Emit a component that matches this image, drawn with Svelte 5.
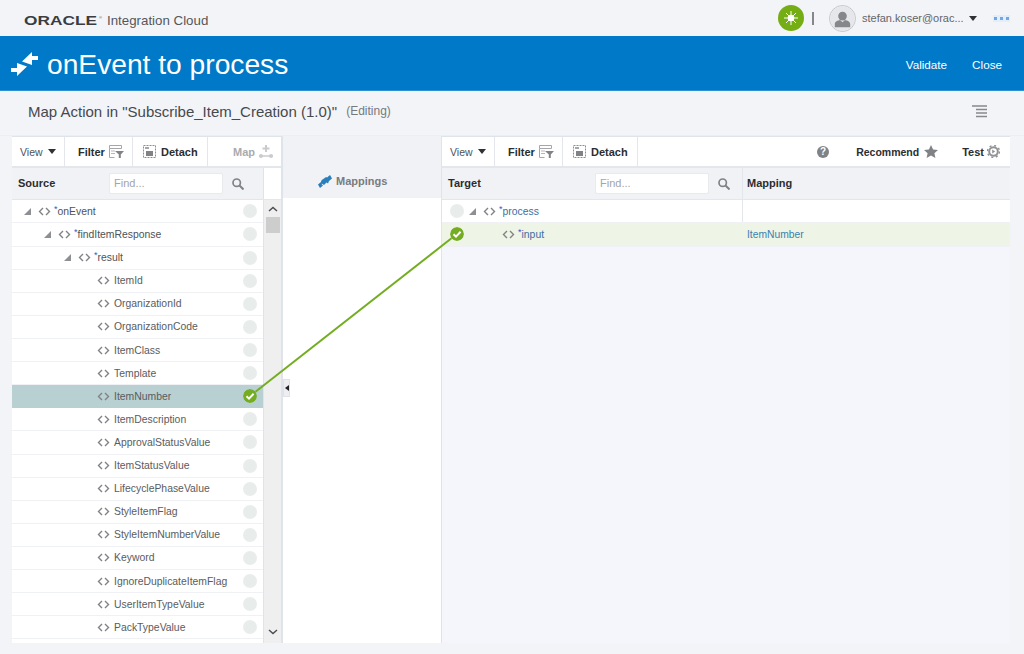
<script>
	const sourceRows = [
		{ name: "onEvent", level: 0, open: true, req: true },
		{ name: "findItemResponse", level: 1, open: true, req: true },
		{ name: "result", level: 2, open: true, req: true },
		{ name: "ItemId", level: 3 },
		{ name: "OrganizationId", level: 3 },
		{ name: "OrganizationCode", level: 3 },
		{ name: "ItemClass", level: 3 },
		{ name: "Template", level: 3 },
		{ name: "ItemNumber", level: 3, mapped: true },
		{ name: "ItemDescription", level: 3 },
		{ name: "ApprovalStatusValue", level: 3 },
		{ name: "ItemStatusValue", level: 3 },
		{ name: "LifecyclePhaseValue", level: 3 },
		{ name: "StyleItemFlag", level: 3 },
		{ name: "StyleItemNumberValue", level: 3 },
		{ name: "Keyword", level: 3 },
		{ name: "IgnoreDuplicateItemFlag", level: 3 },
		{ name: "UserItemTypeValue", level: 3 },
		{ name: "PackTypeValue", level: 3 }
	];
</script>

{#snippet tag()}
	<svg class="tag" width="13" height="9" viewBox="0 0 13 9"><path d="M5 1 1.500 4.500 5 8M8 1l3.500 3.500L8 8" fill="none" stroke="#808285" stroke-width="1.400"/></svg>
{/snippet}

{#snippet tri()}
	<svg class="tri" width="7" height="7" viewBox="0 0 7 7"><path d="M7 0v7H0z" fill="#8d8f92"/></svg>
{/snippet}

{#snippet check()}
	<svg class="dot" width="14" height="14" viewBox="0 0 14 14"><circle cx="7" cy="7" r="7" fill="#74ad22"/><path d="M3.500 7.200 6 9.600l4.600-4.800" fill="none" stroke="#fff" stroke-width="2"/></svg>
{/snippet}

{#snippet filterIcon()}
	<svg width="15" height="14" viewBox="0 0 15 14"><path d="M.5.500h12v3h-12zM.5 3.500v9h5" fill="none" stroke="#a5a7aa"/><path d="M2 6h4M2 8.500h4" stroke="#b5b7ba"/><path d="M6 6h9L11.800 9.500V13h-2V9.500z" fill="#808285"/></svg>
{/snippet}

{#snippet detachIcon()}
	<svg width="13" height="13" viewBox="0 0 13 13"><rect x=".5" y=".5" width="12" height="12" fill="none" stroke="#8b8d90" stroke-dasharray="2 1"/><path d="M2 2h4v2H2z" fill="#a5a7aa"/><rect x="3" y="6" width="7" height="5" fill="#808285"/></svg>
{/snippet}

<div class="page">
	<header class="brandbar">
		<div class="brand">
			<span class="oracle">ORACLE</span><span class="reg">®</span>
			<span class="product">Integration Cloud</span>
		</div>
		<div class="user">
			<span class="sun">
				<svg width="14" height="14" viewBox="0 0 14 14"><circle cx="7" cy="7" r="3.300" fill="#fff"/><path d="M7 0v14M0 7h14M2 2l10 10M12 2 2 12" stroke="#fff" stroke-width="1"/></svg>
			</span>
			<span class="divider"></span>
			<span class="avatar">
				<svg width="25" height="25" viewBox="0 0 26 26"><circle cx="13" cy="13" r="13" fill="#e6e7ea"/><circle cx="13" cy="10.500" r="4.500" fill="#85878b"/><path d="M5 22v-3c0-3 3-4 5.500-4.500L13 17l2.500-2.500C18 15 21 16 21 19v3z" fill="#85878b"/></svg>
			</span>
			<span class="email">stefan.koser@orac...</span>
			<span class="caret"></span>
			<span class="more"><i></i><i></i><i></i></span>
		</div>
	</header>

	<div class="titlebar">
		<svg width="27" height="24" viewBox="0 0 27 24"><path d="M21 0 11 9.500 21 13V8h6V4h-6z" fill="#fff"/><path d="M6 24 16 14.500 6 11v5H0v4h6z" fill="#fff"/></svg>
		<h1>onEvent to process</h1>
		<nav>
			<span>Validate</span>
			<span>Close</span>
		</nav>
	</div>

	<div class="subbar">
		<span class="action">Map Action in "Subscribe_Item_Creation (1.0)"</span>
		<span class="editing">(Editing)</span>
		<svg class="lines" width="15" height="13" viewBox="0 0 15 13"><path d="M0 1h15M4 4.500h11M4 8h11M4 11.500h11" stroke="#86888b" stroke-width="1.500"/></svg>
	</div>

	<main class="mapper">
		<section class="panel source">
			<div class="toolbar">
				<div class="tool view"><span>View</span><span class="caret"></span></div>
				<div class="tool filter"><b>Filter</b>{@render filterIcon()}</div>
				<div class="tool detach">{@render detachIcon()}<b>Detach</b></div>
				<div class="tool map">
					<b>Map</b>
					<svg width="14" height="13" viewBox="0 0 14 13"><path d="M7 0v7M3.500 3.500h7" stroke="#c9cbce" stroke-width="2"/><path d="M0 11h14" stroke="#c9cbce" stroke-width="1.500"/><circle cx="2" cy="11" r="2" fill="#c9cbce"/><circle cx="12" cy="11" r="2" fill="#c9cbce"/></svg>
				</div>
			</div>
			<div class="head">
				<div class="headmain">
					<b>Source</b>
					<div class="find">Find...</div>
					<svg class="search" width="12" height="12" viewBox="0 0 12 12"><circle cx="4.700" cy="4.700" r="3.700" fill="none" stroke="#808285" stroke-width="1.700"/><path d="m7.500 7.500 4 4" stroke="#808285" stroke-width="2"/></svg>
				</div>
				<div class="headgap"></div>
			</div>
			<div class="treewrap">
				<div class="tree">
					{#each sourceRows as row}
						<div class="row" class:selected={row.mapped}>
							<div class="label level{row.level}">
								{#if row.open}{@render tri()}{/if}
								{@render tag()}
								<span class="name" class:req={row.req}>{#if row.req}<sup>*</sup>{/if}{row.name}</span>
							</div>
							{#if row.mapped}{@render check()}{:else}<span class="dot empty"></span>{/if}
						</div>
					{/each}
				</div>
				<div class="scrollbar">
					<svg width="10" height="6" viewBox="0 0 10 6"><path d="m1 5 4-3.500L9 5" fill="none" stroke="#4c4e51" stroke-width="1.500"/></svg>
					<div class="thumb"></div>
					<svg class="down" width="10" height="6" viewBox="0 0 10 6"><path d="m1 1 4 3.500L9 1" fill="none" stroke="#4c4e51" stroke-width="1.500"/></svg>
				</div>
			</div>
		</section>

		<section class="middle">
			<div class="middlehead">
				<svg width="14" height="13" viewBox="0 0 14 13"><path d="M0 9.500 3 7l1-2.500L6 6 3.500 9 5 10.500 2 13zM14 3.500 11 6l-1 2.500L8 7l2.500-3L9 2.500 12 0z" fill="#2a7fba"/><path d="M4 5 8 2l4 2-4 4-2 2-3-2z" fill="#2a7fba"/></svg>
				<b>Mappings</b>
			</div>
			<div class="collapse"><span></span></div>
		</section>

		<section class="panel target">
			<div class="toolbar">
				<div class="tool view"><span>View</span><span class="caret"></span></div>
				<div class="tool filter"><b>Filter</b>{@render filterIcon()}</div>
				<div class="tool detach">{@render detachIcon()}<b>Detach</b></div>
				<div class="toolright">
					<span class="help">?</span>
					<b class="recommend">Recommend</b>
					<svg width="14" height="13" viewBox="0 0 14 13"><path d="m7 0 2.100 4.500 4.900.5-3.600 3.300 1 4.700L7 10.600 2.600 13l1-4.700L0 5l4.900-.5z" fill="#808285"/></svg>
					<b class="test">Test</b>
					<svg width="13" height="13" viewBox="0 0 13 13"><circle cx="6.500" cy="6.500" r="4.300" fill="none" stroke="#909295" stroke-width="2"/><circle cx="6.500" cy="6.500" r="6" fill="none" stroke="#909295" stroke-width="1.500" stroke-dasharray="2 2.700"/><path d="M5.200 4.500v4l3-2z" fill="#909295"/></svg>
				</div>
			</div>
			<div class="head">
				<div class="targetcol">
					<b>Target</b>
					<div class="find">Find...</div>
					<svg class="search" width="12" height="12" viewBox="0 0 12 12"><circle cx="4.700" cy="4.700" r="3.700" fill="none" stroke="#808285" stroke-width="1.700"/><path d="m7.500 7.500 4 4" stroke="#808285" stroke-width="2"/></svg>
				</div>
				<div class="mappingcol"><b>Mapping</b></div>
			</div>
			<div class="targettree">
				<div class="trow">
					<div class="targetcol first">
						<span class="dot empty"></span>
						{@render tri()}
						{@render tag()}
						<span class="name req"><sup>*</sup>process</span>
					</div>
					<div class="mappingcol"></div>
				</div>
				<div class="trow mapped">
					<div class="targetcol second">
						{@render check()}
						<span class="indent">{@render tag()}</span>
						<span class="name"><sup>*</sup>input</span>
					</div>
					<div class="mappingcol link">ItemNumber</div>
				</div>
			</div>
		</section>

		<svg class="wire" width="220" height="170" viewBox="0 0 220 170"><path d="M9.500 161.700 205.500 8.300" stroke="#74ad22" stroke-width="2" fill="none"/></svg>
	</main>
</div>

<style>
	:global(body) {
		margin: 0;
		background: #f3f4f7;
	}

	.page {
		width: 1024px;
		height: 654px;
		overflow: hidden;
		background: #f3f4f7;
		font-family: "Liberation Sans", Arial, sans-serif;
		font-size: 11px;
		color: #4f5256;
	}

	.brandbar {
		height: 36px;
		display: flex;
		align-items: center;
		justify-content: space-between;
		padding: 0 14px 0 24px;
		box-sizing: border-box;
	}

	.brand {
		display: flex;
		align-items: center;
		padding-top: 5px;
	}

	.oracle {
		font-size: 13px;
		font-weight: 700;
		color: #3a3c3f;
		transform: scaleX(1.330);
		transform-origin: left center;
		width: 75px;
	}

	.reg {
		font-size: 4px;
		margin: -6px 0 0 0;
		width: 8px;
	}

	.product {
		font-size: 13.300px;
		color: #54575b;
	}

	.user {
		display: flex;
		align-items: center;
	}

	.sun {
		width: 26px;
		height: 26px;
		border-radius: 50%;
		background: #74ad14;
		display: flex;
		align-items: center;
		justify-content: center;
	}

	.divider {
		width: 2px;
		height: 13px;
		background: #85878b;
		margin: 0 15px 0 8px;
	}

	.avatar {
		width: 25px;
		height: 25px;
		border: 1px solid #c4c5c8;
		border-radius: 50%;
		display: flex;
		overflow: hidden;
	}

	.email {
		font-size: 11px;
		color: #636569;
		margin-left: 6px;
		width: 107px;
	}

	.caret {
		width: 0;
		height: 0;
		border-left: 4px solid transparent;
		border-right: 4px solid transparent;
		border-top: 5px solid #2f3134;
		display: inline-block;
	}

	.more {
		display: flex;
		gap: 3px;
		margin-left: 16px;
		padding: 2px 1px;
		background: #e3eefa;
	}

	.more i {
		width: 3px;
		height: 3px;
		background: #6fa8e6;
	}

	.titlebar {
		height: 55px;
		background: #0079c8;
		display: flex;
		align-items: center;
		color: #fff;
		padding: 2px 22px 0 11px;
		border-bottom: 1px solid #2f8fd0;
		box-sizing: border-box;
	}

	h1 {
		margin: 0 0 0 9px;
		font-size: 28.200px;
		font-weight: 400;
		color: #fff;
	}

	nav {
		margin-left: auto;
		display: flex;
		gap: 25px;
		font-size: 11.700px;
	}

	.subbar {
		height: 45px;
		display: flex;
		align-items: center;
		padding: 0 37px 4px 28px;
		box-sizing: border-box;
		border-bottom: 1px solid #eceef1;
	}

	.action {
		font-size: 15px;
		color: #46494d;
	}

	.editing {
		font-size: 12px;
		color: #77797d;
		margin-left: 9px;
	}

	.lines {
		margin-left: auto;
	}

	.mapper {
		position: relative;
		display: flex;
		height: 507px;
		margin-left: 12px;
		width: 998px;
	}

	.panel {
		display: flex;
		flex-direction: column;
		border-top: 1px solid #dfe4ea;
		box-sizing: border-box;
	}

	.source {
		width: 270px;
		background: #fff;
		border-right: 1px solid #dfe4ea;
	}

	.target {
		width: 568px;
		background: #f5f6fb;
	}

	.toolbar {
		height: 29px;
		flex: none;
		display: flex;
		align-items: center;
		background: #fff;
		border-bottom: 2px solid #e3e7ec;
	}

	.tool {
		height: 29px;
		display: flex;
		align-items: center;
		gap: 4px;
		box-sizing: border-box;
		border-right: 1px solid #e3e7ec;
		font-size: 10.500px;
		white-space: nowrap;
	}

	.tool b, .toolright b {
		color: #2b2d30;
		font-size: 11px;
	}

	.view {
		width: 53px;
		padding-left: 8px;
		gap: 5px;
	}

	.filter {
		width: 68px;
		padding-left: 13px;
	}

	.detach {
		width: 75px;
		padding-left: 10px;
		gap: 5px;
	}

	.map {
		border: 0;
		padding-left: 25px;
	}

	.tool.map b {
		color: #a9abae;
	}

	.toolright {
		margin-left: auto;
		display: flex;
		align-items: center;
		padding-right: 10px;
	}

	.help {
		width: 12px;
		height: 12px;
		border-radius: 50%;
		background: #808285;
		color: #fff;
		font-size: 10px;
		font-weight: 700;
		text-align: center;
		line-height: 12px;
		margin-right: 27px;
	}

	.toolright b.recommend {
		font-size: 10.500px;
		margin-right: 5px;
	}

	.test {
		margin: 0 3px 0 24px;
	}

	.head {
		height: 32.300px;
		flex: none;
		display: flex;
		box-sizing: border-box;
		border-bottom: 1px solid #e3e7ec;
	}

	.head b {
		font-size: 11px;
		color: #2b2d30;
		position: relative;
		top: -1px;
	}

	.headmain {
		width: 252px;
		background: #f0f2f6;
		display: flex;
		align-items: center;
		padding-left: 6px;
		box-sizing: border-box;
		border-right: 1px solid #dfe4ea;
	}

	.headgap {
		flex: 1;
		background: #fff;
	}

	.find {
		width: 114px;
		height: 21px;
		box-sizing: border-box;
		background: #fff;
		border: 1px solid #e8eaee;
		border-radius: 2px;
		color: #a3a5a8;
		line-height: 19px;
		padding-left: 4px;
		margin-left: auto;
	}

	.search {
		margin: 0 19px 0 9px;
	}

	.treewrap {
		flex: 1;
		display: flex;
		min-height: 0;
	}

	.tree {
		width: 252px;
		box-sizing: border-box;
		border-right: 1px solid #dfe4ea;
		overflow: hidden;
	}

	.row {
		height: 23.110px;
		box-sizing: border-box;
		display: flex;
		align-items: center;
		justify-content: space-between;
		padding-right: 6px;
		border-bottom: 1px solid #f0f1f4;
	}

	.row.selected {
		background: #b8d0d1;
		border-bottom-color: #b8d0d1;
	}

	.label {
		display: flex;
		align-items: center;
		position: relative;
	}

	.tri {
		margin-right: 7px;
		flex: none;
	}

	.tag {
		flex: none;
		margin-right: 4px;
	}

	.level0 { padding-left: 12px; }
	.level1 { padding-left: 32px; }
	.level2 { padding-left: 52px; }
	.level3 { padding-left: 85px; }

	.name {
		font-size: 10.400px;
		color: #595c60;
		white-space: nowrap;
	}

	.name.req {
		color: #4f5256;
	}

	.targettree .name {
		color: #3c6ea3;
	}

	sup {
		color: #2f55d4;
		font-size: 9px;
		line-height: 0;
		vertical-align: 3px;
		margin-left: -1px;
	}

	.dot {
		width: 14px;
		height: 14px;
		flex: none;
		border-radius: 50%;
		display: block;
	}

	.dot.empty {
		background: #e8edec;
	}

	.scrollbar {
		flex: 1;
		background: #efefef;
		display: flex;
		flex-direction: column;
		align-items: center;
		padding: 6px 0 8px;
		box-sizing: border-box;
	}

	.thumb {
		width: 14px;
		height: 16px;
		margin-top: 5px;
		background: #cdcdcd;
	}

	.down {
		margin-top: auto;
	}

	.middle {
		position: relative;
		width: 160px;
		background: #fff;
		box-sizing: border-box;
		border-left: 1px solid #dfe4ea;
		border-right: 1px solid #dfe4ea;
	}

	.middlehead {
		height: 62px;
		background: #f0f2f6;
		display: flex;
		align-items: center;
		gap: 4px;
		padding: 28px 0 0 35px;
		box-sizing: border-box;
	}

	.middlehead b {
		font-size: 11px;
		color: #797b7f;
	}

	.collapse {
		position: absolute;
		left: 0;
		top: 243px;
		width: 7px;
		height: 18px;
		background: #eceef1;
		border: 1px solid #dfe3e8;
		box-sizing: border-box;
		display: flex;
		align-items: center;
		justify-content: center;
	}

	.collapse span {
		width: 0;
		height: 0;
		border-top: 3px solid transparent;
		border-bottom: 3px solid transparent;
		border-right: 4px solid #222;
	}

	.targetcol {
		width: 301px;
		flex: none;
		display: flex;
		align-items: center;
		box-sizing: border-box;
		border-right: 1px solid #e3e7ec;
	}

	.head .targetcol {
		background: #f0f2f6;
		padding-left: 6px;
	}

	.head .targetcol .search {
		margin: 0 12px 0 9px;
	}

	.mappingcol {
		flex: 1;
		display: flex;
		align-items: center;
		padding-left: 4px;
		background: #f0f2f6;
	}

	.targettree {
		flex: 1;
	}

	.trow {
		height: 23.110px;
		display: flex;
		background: #fff;
		border-bottom: 1px solid #f0f1f4;
		box-sizing: border-box;
	}

	.trow .mappingcol {
		background: transparent;
	}

	.trow.mapped {
		background: #eef4e6;
	}

	.trow.mapped .targetcol {
		border-right-color: transparent;
	}

	.first {
		padding-left: 8px;
	}

	.first .tri {
		margin-left: 5px;
	}

	.second {
		padding-left: 8px;
	}

	.indent {
		display: inline-flex;
		margin-left: 38px;
	}

	.link {
		color: #3c7fb0;
		font-size: 10.300px;
	}

	.wire {
		position: absolute;
		left: 234px;
		top: 94px;
		pointer-events: none;
	}
</style>
